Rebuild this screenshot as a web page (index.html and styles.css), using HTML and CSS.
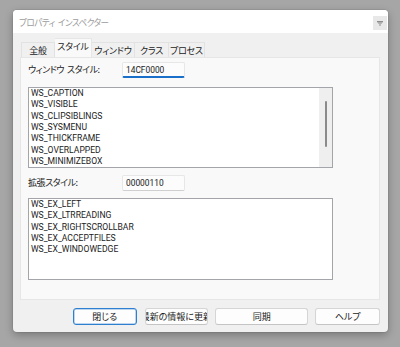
FILE: index.html
```html
<!DOCTYPE html>
<html lang="ja">
<head>
<meta charset="utf-8">
<link rel="stylesheet" href="styles.css">
</head>
<body>
<div class="window">
  <div class="titlebar">
    <span class="title">プロパティ<span class="gap"></span>インスペクター</span>
    <span class="pin"><svg width="6" height="5" viewBox="0 0 6 5"><rect x="0" y="0" width="6" height="1.4" fill="#8c8c8c"/><rect x="1" y="1.4" width="4" height="1.2" fill="#a0a0a0"/><rect x="2.5" y="2.6" width="1" height="2.4" fill="#8c8c8c"/></svg></span>
  </div>
  <div class="client">
    <div class="tabs">
      <div class="tab t1">全般</div>
      <div class="tab t2 active">スタイル</div>
      <div class="tab t3">ウィンドウ</div>
      <div class="tab t4">クラス</div>
      <div class="tab t5">プロセス</div>
    </div>
    <div class="panel">
      <div class="field">
        <span class="label">ウィンドウ<span class="gap"></span>スタイル:</span>
        <span class="edit focused">14CF0000</span>
      </div>
      <div class="list list1">
        <div class="items">
          <div>WS_CAPTION</div>
          <div>WS_VISIBLE</div>
          <div>WS_CLIPSIBLINGS</div>
          <div>WS_SYSMENU</div>
          <div>WS_THICKFRAME</div>
          <div>WS_OVERLAPPED</div>
          <div>WS_MINIMIZEBOX</div>
        </div>
        <div class="scrollbar"><div class="thumb"></div></div>
      </div>
      <div class="field field2">
        <span class="label">拡張スタイル:</span>
        <span class="edit">00000110</span>
      </div>
      <div class="list list2">
        <div class="items">
          <div>WS_EX_LEFT</div>
          <div>WS_EX_LTRREADING</div>
          <div>WS_EX_RIGHTSCROLLBAR</div>
          <div>WS_EX_ACCEPTFILES</div>
          <div>WS_EX_WINDOWEDGE</div>
        </div>
      </div>
    </div>
    <div class="buttons">
      <div class="btn b-close default"><span>閉じる</span></div>
      <div class="btn b-refresh"><span>最新の情報に更新</span></div>
      <div class="btn b-sync"><span>同期</span></div>
      <div class="btn b-help"><span>ヘルプ</span></div>
    </div>
  </div>
</div>
</body>
</html>
```

FILE: styles.css
```css
* { box-sizing: border-box; }
html, body { margin: 0; padding: 0; }
body {
  width: 400px;
  height: 347px;
  background: #a6a6a6;
  font-family: "Noto Sans CJK JP", "Noto Sans", sans-serif;
  font-size: 9px;
  color: #1b1b1b;
  padding-top: 10px;
  padding-left: 13px;
  overflow: hidden;
}
.window {
  width: 375px;
  height: 322px;
  background: #f0f0f0;
  border-radius: 4px;
  box-shadow: 0 3px 8px rgba(0,0,0,0.28), 0 0 0 1px rgba(0,0,0,0.06);
  display: flex;
  flex-direction: column;
  overflow: hidden;
}
.titlebar {
  height: 23px;
  background: #ffffff;
  display: flex;
  align-items: center;
  justify-content: space-between;
  padding-left: 6px;
  padding-right: 1px;
}
.title {
  font-size: 8.6px;
  color: #9c9c9c;
  font-feature-settings: "palt";
  letter-spacing: -0.5px;
  display: flex;
  align-items: center;
  line-height: 12px;
}
.gap { display: inline-block; width: 3px; }
.pin {
  width: 14px;
  height: 14px;
  margin-top: 3px;
  background: #e8e8e8;
  display: flex;
  align-items: center;
  justify-content: center;
}
.client {
  flex: 1;
  display: flex;
  flex-direction: column;
  padding: 5px 8px 0 7px;
}
.tabs {
  display: flex;
  align-items: flex-end;
  height: 19px;
  padding-left: 1px;
}
.tab {
  height: 15px;
  display: flex;
  align-items: center;
  justify-content: center;
  background: #f0f0f0;
  border: 1px solid #e2e2e2;
  border-bottom: none;
  font-feature-settings: "palt";
  letter-spacing: -0.2px;
  line-height: 1;
  padding-top: 1px;
}
.tab + .tab { border-left: none; }
.t1 { width: 34px; }
.t2 { width: 37px; }
.t3 { width: 43px; }
.t4 { width: 34px; }
.t5 { width: 36px; }
.tab.active {
  height: 19px;
  background: #f9f9f9;
  align-items: flex-start;
  padding-top: 3px;
  border-color: #e6e6e6;
}
.panel {
  height: 243px;
  background: #f9f9f9;
  border: 1px solid #e6e6e6;
  padding: 4px 0 0 7px;
  display: flex;
  flex-direction: column;
}
.field {
  height: 16px;
  display: flex;
  align-items: center;
}
.label {
  width: 94px;
  font-feature-settings: "palt";
  letter-spacing: -0.45px;
  color: #202020;
  display: flex;
  align-items: center;
  line-height: 12px;
}
.edit {
  width: 63px;
  height: 16px;
  background: #fcfcfc;
  border: 1px solid #e7e7e7;
  border-bottom: 1px solid #cfcfcf;
  border-radius: 2px;
  padding-left: 3px;
  display: flex;
  align-items: center;
  font-family: Roboto, "Noto Sans", sans-serif;
  font-size: 8.4px;
  color: #1b1b1b;
}
.edit.focused {
  border-bottom: 2px solid #1a6fc8;
  padding-top: 1px;
}
.list {
  width: 305px;
  background: #ffffff;
  border: 1px solid #a3a5ab;
  display: flex;
}
.list1 { height: 81px; margin-top: 9px; }
.field2 { margin-top: 7px; }
.list2 { height: 82px; margin-top: 7px; }
.items {
  flex: 1;
  padding-left: 2px;
  font-family: Roboto, "Noto Sans", sans-serif;
  font-size: 8.6px;
  line-height: 11.33px;
  color: #1b1b1b;
}
.items div { height: 11.33px; }
.scrollbar {
  width: 13px;
  background: #efefef;
  display: flex;
  justify-content: center;
  padding-top: 13px;
}
.thumb {
  width: 2px;
  height: 46px;
  background: #8b8b8b;
  border-radius: 1px;
}
.buttons {
  display: flex;
  gap: 7px;
  margin-top: 8px;
  padding-left: 53px;
}
.btn {
  height: 17px;
  background: #fdfdfd;
  border: 1px solid #d5d5d5;
  border-bottom-color: #c4c4c4;
  border-radius: 3px;
  display: flex;
  align-items: center;
  justify-content: center;
  overflow: hidden;
  white-space: nowrap;
  font-feature-settings: "palt";
  color: #1b1b1b;
  line-height: 12px;
}
.btn span { flex: none; }
.b-close { width: 64px; margin-right: 1px; }
.b-refresh { width: 64px; }
.b-sync { width: 94px; }
.b-help { width: 65px; }
.btn.default {
  border: 1px solid #2f7fd0;
  box-shadow: inset 0 0 0 0.5px #7fb0e4;
}
```
